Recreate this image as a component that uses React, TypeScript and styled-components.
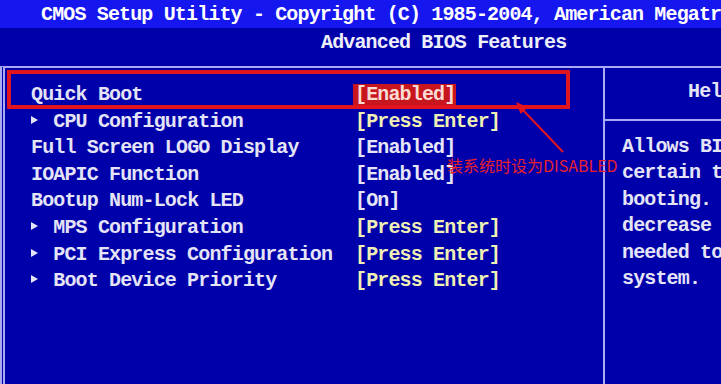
import React from "react";
import styled, { createGlobalStyle, css } from "styled-components";

const mono = `"Liberation Mono", "DejaVu Sans Mono", monospace`;
const line = "#aaaaf4";
const rowHeight = 26.6;

const GlobalStyle = createGlobalStyle`
    html, body {
        margin: 0;
        padding: 0;
        background: #0000aa;
        overflow: hidden;
    }
    #root {
        width: 721px;
        height: 384px;
    }
`;

const Screen = styled.div`
    position: relative;
    width: 721px;
    height: 384px;
    display: flex;
    flex-direction: column;
    overflow: hidden;
    background: #0000aa;
    color: #e4e4f6;
    font-family: ${mono};
    font-size: 20px;
    font-weight: bold;
    letter-spacing: -0.85px;
`;
const TitleBar = styled.div`
    flex: none;
    height: 28px;
    box-sizing: border-box;
    padding: 1px 0 0 41px;
    line-height: 28px;
    background: #1616ee;
    color: #ffffff;
    white-space: nowrap;
`;
const SubTitle = styled.div`
    flex: none;
    height: 38px;
    box-sizing: border-box;
    padding: 1px 0 0 321px;
    line-height: 28px;
    color: #eeeefa;
    white-space: nowrap;
`;
const Panel = styled.div`
    flex: 1;
    min-height: 0;
    display: flex;
    border-top: 2px solid ${line};
    border-left: 5px double ${line};
`;
const Menu = styled.div`
    width: 598px;
    flex: none;
    box-sizing: border-box;
    padding: 14px 0 0 26px;
`;
const Row = styled.div<{ $framed?: boolean }>`
    position: relative;
    display: grid;
    grid-template-columns: 324px auto;
    height: ${rowHeight}px;
    line-height: ${rowHeight}px;
    white-space: nowrap;
    ${p => p.$framed && css`
        &::after {
            content: '';
            position: absolute;
            left: -24px;
            top: -12px;
            width: 563px;
            height: 39px;
            box-sizing: border-box;
            border: 4px solid #e2141e;
        }
    `}
`;
const Marker = styled.span`
    display: inline-block;
    width: 22.3px;
    &::before {
        content: '';
        display: inline-block;
        vertical-align: 3px;
        border-left: 7px solid #e4e4f6;
        border-top: 4px solid transparent;
        border-bottom: 4px solid transparent;
    }
`;
type Tone = "plain" | "action" | "selected";
const Value = styled.span<{ $tone: Tone }>`
    color: ${p => p.$tone === "action" ? "#f0f0b4" : "#e6e6f6"};
    ${p => p.$tone === "selected" && css`
        display: inline-block;
        line-height: 21px;
        margin-left: -2px;
        padding: 0 1px 0 2px;
        background: #c8161e;
        color: #f8dcd4;
    `}
`;
const Help = styled.div`
    flex: 1;
    min-width: 0;
    overflow: hidden;
    border-left: 2px solid ${line};
    white-space: nowrap;
`;
const HelpHeader = styled.div`
    height: 53px;
    box-sizing: border-box;
    padding: 11px 0 0 83px;
    line-height: ${rowHeight}px;
    border-bottom: 2px solid ${line};
`;
const HelpBody = styled.div`
    padding: 12.5px 0 0 17px;
    line-height: ${rowHeight}px;
`;
const Note = styled.div`
    position: absolute;
    left: 447px;
    top: 156px;
    font-family: "Noto Sans CJK SC", "Liberation Sans", sans-serif;
    font-size: 16px;
    font-weight: normal;
    line-height: 19px;
    letter-spacing: 0;
    color: #e8202c;
    white-space: nowrap;
`;
const Pointer = styled.svg`
    position: absolute;
    left: 505px;
    top: 95px;
`;

const items: { label: string; value: string; tone: Tone; sub?: boolean }[] = [
    { label: "Quick Boot", value: "[Enabled]", tone: "selected" },
    { label: "CPU Configuration", value: "[Press Enter]", tone: "action", sub: true },
    { label: "Full Screen LOGO Display", value: "[Enabled]", tone: "plain" },
    { label: "IOAPIC Function", value: "[Enabled]", tone: "plain" },
    { label: "Bootup Num-Lock LED", value: "[On]", tone: "plain" },
    { label: "MPS Configuration", value: "[Press Enter]", tone: "action", sub: true },
    { label: "PCI Express Configuration", value: "[Press Enter]", tone: "action", sub: true },
    { label: "Boot Device Priority", value: "[Press Enter]", tone: "action", sub: true },
];

// only the part of the help text that fits in the visible panel
const helpLines = ["Allows BI", "certain t", "booting.", "decrease", "needed to", "system."];

export default function App() {
    return (
        <Screen>
            <GlobalStyle />
            <TitleBar>CMOS Setup Utility - Copyright (C) 1985-2004, American Megatr</TitleBar>
            <SubTitle>Advanced BIOS Features</SubTitle>
            <Panel>
                <Menu>
                    {items.map((item, i) => (
                        <Row key={i} $framed={i === 0}>
                            <span>{item.sub && <Marker />}{item.label}</span>
                            <span><Value $tone={item.tone}>{item.value}</Value></span>
                        </Row>
                    ))}
                </Menu>
                <Help>
                    <HelpHeader>Hel</HelpHeader>
                    <HelpBody>
                        {helpLines.map((l, i) => <div key={i}>{l}</div>)}
                    </HelpBody>
                </Help>
            </Panel>
            <Pointer width="70" height="65" viewBox="0 0 70 65">
                <line x1="58" y1="57" x2="16" y2="13" stroke="#e2141e" strokeWidth="2" />
                <polygon points="11,7 15.7,19.1 22.9,12.2" fill="#e2141e" />
            </Pointer>
            <Note>装系统时设为DISABLED</Note>
        </Screen>
    );
}
